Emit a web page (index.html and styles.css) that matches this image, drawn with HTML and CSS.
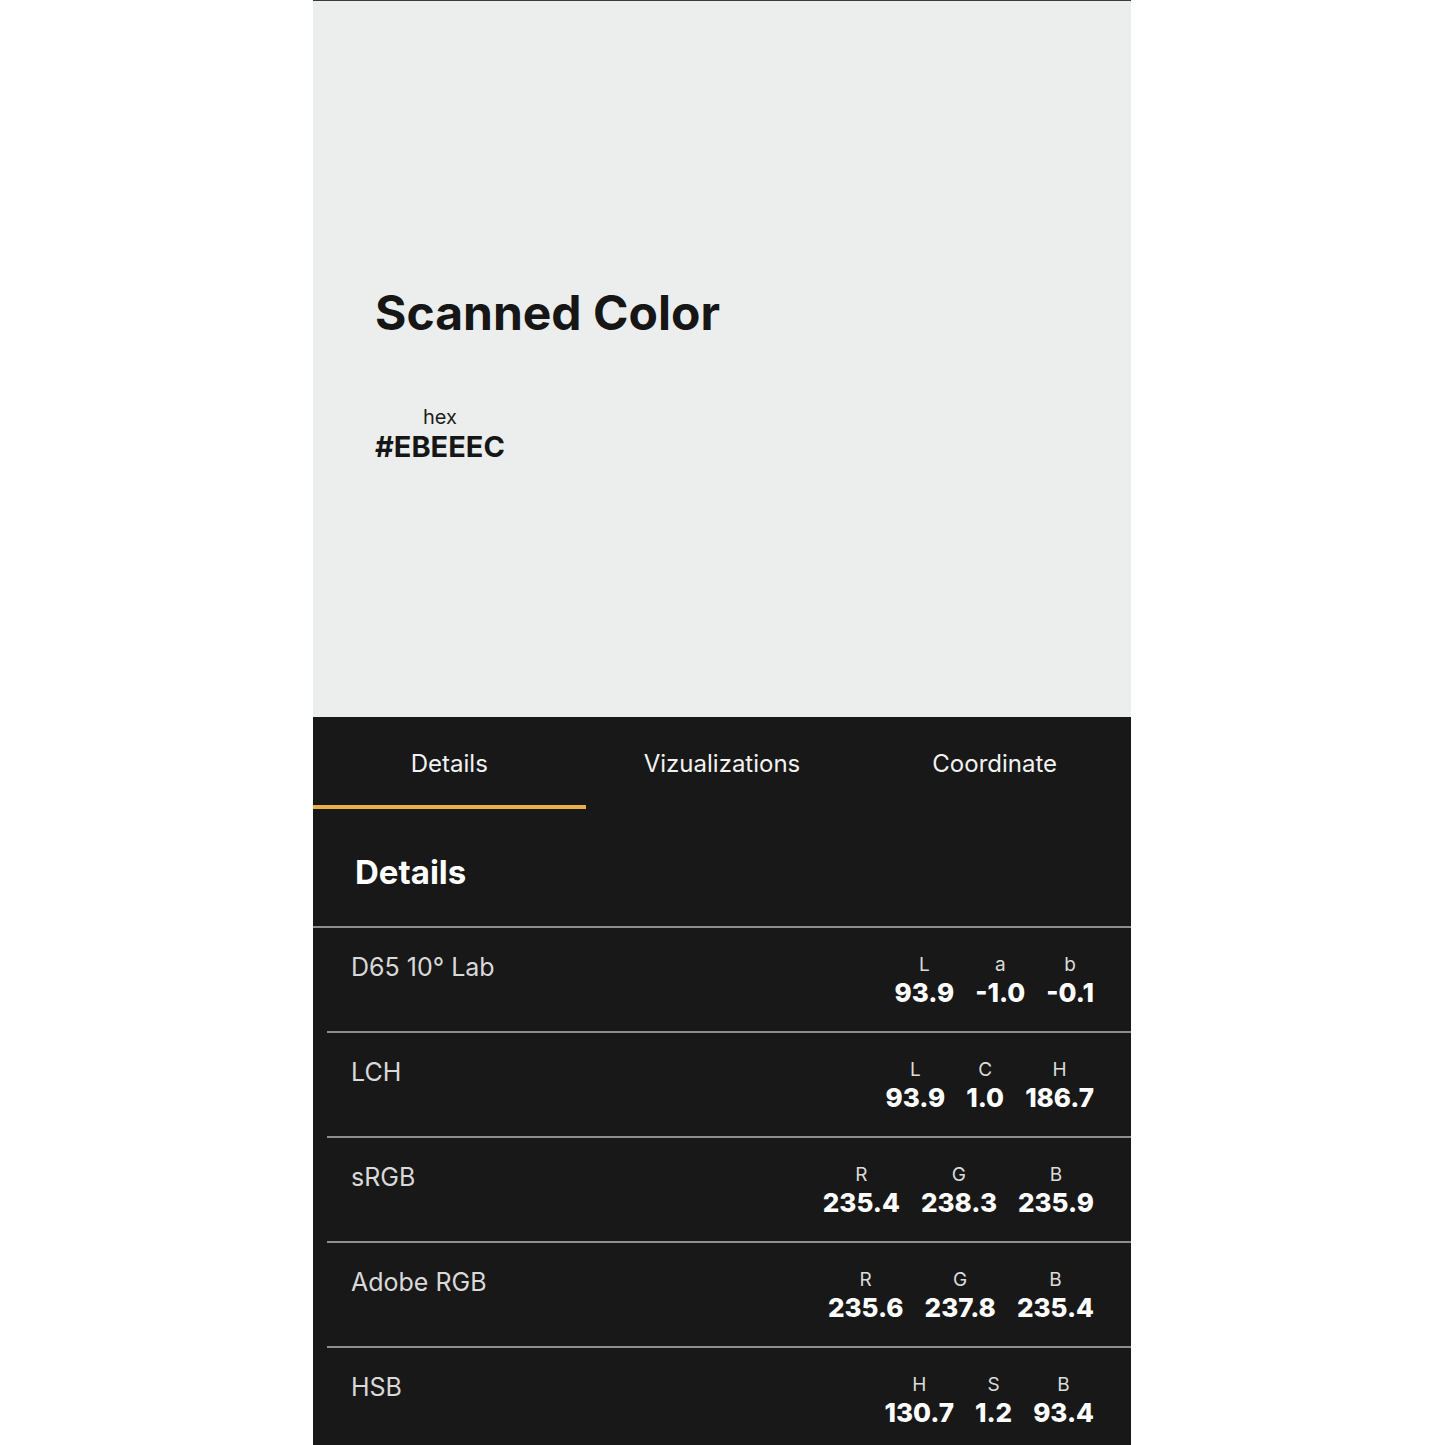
FILE: index.html
```html
<!DOCTYPE html>
<html>
<head>
	<title>Scanned Color</title>
	<meta charset="utf8"/>
	<link rel="stylesheet" href="styles.css">
</head>
<body>
	<div class="screen">
		<section class="swatch">
			<h1>Scanned Color</h1>
			<div class="hex">
				<span class="hex-label">hex</span>
				<span class="hex-value">#EBEEEC</span>
			</div>
		</section>
		<section class="panel">
			<nav class="tabs">
				<div class="tab active">Details</div>
				<div class="tab">Vizualizations</div>
				<div class="tab">Coordinate</div>
			</nav>
			<h2>Details</h2>
			<div class="row">
				<div class="name">D65 10° Lab</div>
				<div class="values">
					<div class="comp"><span>L</span><b>93.9</b></div>
					<div class="comp"><span>a</span><b>-1.0</b></div>
					<div class="comp"><span>b</span><b>-0.1</b></div>
				</div>
			</div>
			<div class="row">
				<div class="name">LCH</div>
				<div class="values">
					<div class="comp"><span>L</span><b>93.9</b></div>
					<div class="comp"><span>C</span><b>1.0</b></div>
					<div class="comp"><span>H</span><b>186.7</b></div>
				</div>
			</div>
			<div class="row">
				<div class="name">sRGB</div>
				<div class="values">
					<div class="comp"><span>R</span><b>235.4</b></div>
					<div class="comp"><span>G</span><b>238.3</b></div>
					<div class="comp"><span>B</span><b>235.9</b></div>
				</div>
			</div>
			<div class="row">
				<div class="name">Adobe RGB</div>
				<div class="values">
					<div class="comp"><span>R</span><b>235.6</b></div>
					<div class="comp"><span>G</span><b>237.8</b></div>
					<div class="comp"><span>B</span><b>235.4</b></div>
				</div>
			</div>
			<div class="row">
				<div class="name">HSB</div>
				<div class="values">
					<div class="comp"><span>H</span><b>130.7</b></div>
					<div class="comp"><span>S</span><b>1.2</b></div>
					<div class="comp"><span>B</span><b>93.4</b></div>
				</div>
			</div>
		</section>
	</div>
</body>
</html>
```

FILE: styles.css
```css
body {
	background: #fff;
	font-family: Inter, "Noto Sans", sans-serif;
	margin: 0;
}

.screen {
	border-top: 1px solid #3a3a3a;
	margin: 0 0 0 313px;
	width: 818px;
}

.swatch {
	background: #ebeeec;
	box-sizing: border-box;
	height: 716px;
	padding: 288px 0 0 62px;
}

h1 {
	color: #161616;
	font-size: 48px;
	font-weight: 700;
	line-height: 1;
	margin: 0 0 70px;
}

.hex {
	align-items: center;
	display: inline-flex;
	flex-direction: column;
	gap: 5px;
}

.hex-label {
	color: #1d1d1d;
	font-size: 20px;
	line-height: 1;
}

.hex-value {
	color: #161616;
	font-size: 29px;
	font-weight: 700;
	line-height: 1;
}

.panel {
	background: #181818;
	color: #fff;
	height: 728px;
	overflow: hidden;
}

.tabs {
	display: flex;
}

.tab {
	border-bottom: 4px solid transparent;
	color: #f2f2f2;
	flex: 1;
	font-size: 24px;
	line-height: 1;
	padding: 35px 0 29px;
	text-align: center;
}

.tab.active {
	border-bottom-color: #ecb04a;
}

h2 {
	border-bottom: 2px solid #8e8e8e;
	font-size: 33px;
	font-weight: 700;
	line-height: 1;
	margin: 0;
	padding: 47px 0 37px 42px;
}

.row {
	border-bottom: 2px solid #8e8e8e;
	box-sizing: border-box;
	display: flex;
	height: 105px;
	justify-content: space-between;
	margin-left: 14px;
	padding: 27px 37px 0 24px;
}

.name {
	color: #d9d9d9;
	font-size: 25px;
	line-height: 1;
}

.values {
	display: flex;
	gap: 21px;
}

.comp {
	align-items: center;
	display: flex;
	flex-direction: column;
	gap: 6px;
}

.comp span {
	color: #dcdcdc;
	font-size: 19px;
	line-height: 1;
}

.comp b {
	font-size: 26px;
	font-weight: 800;
	line-height: 1;
}
```
